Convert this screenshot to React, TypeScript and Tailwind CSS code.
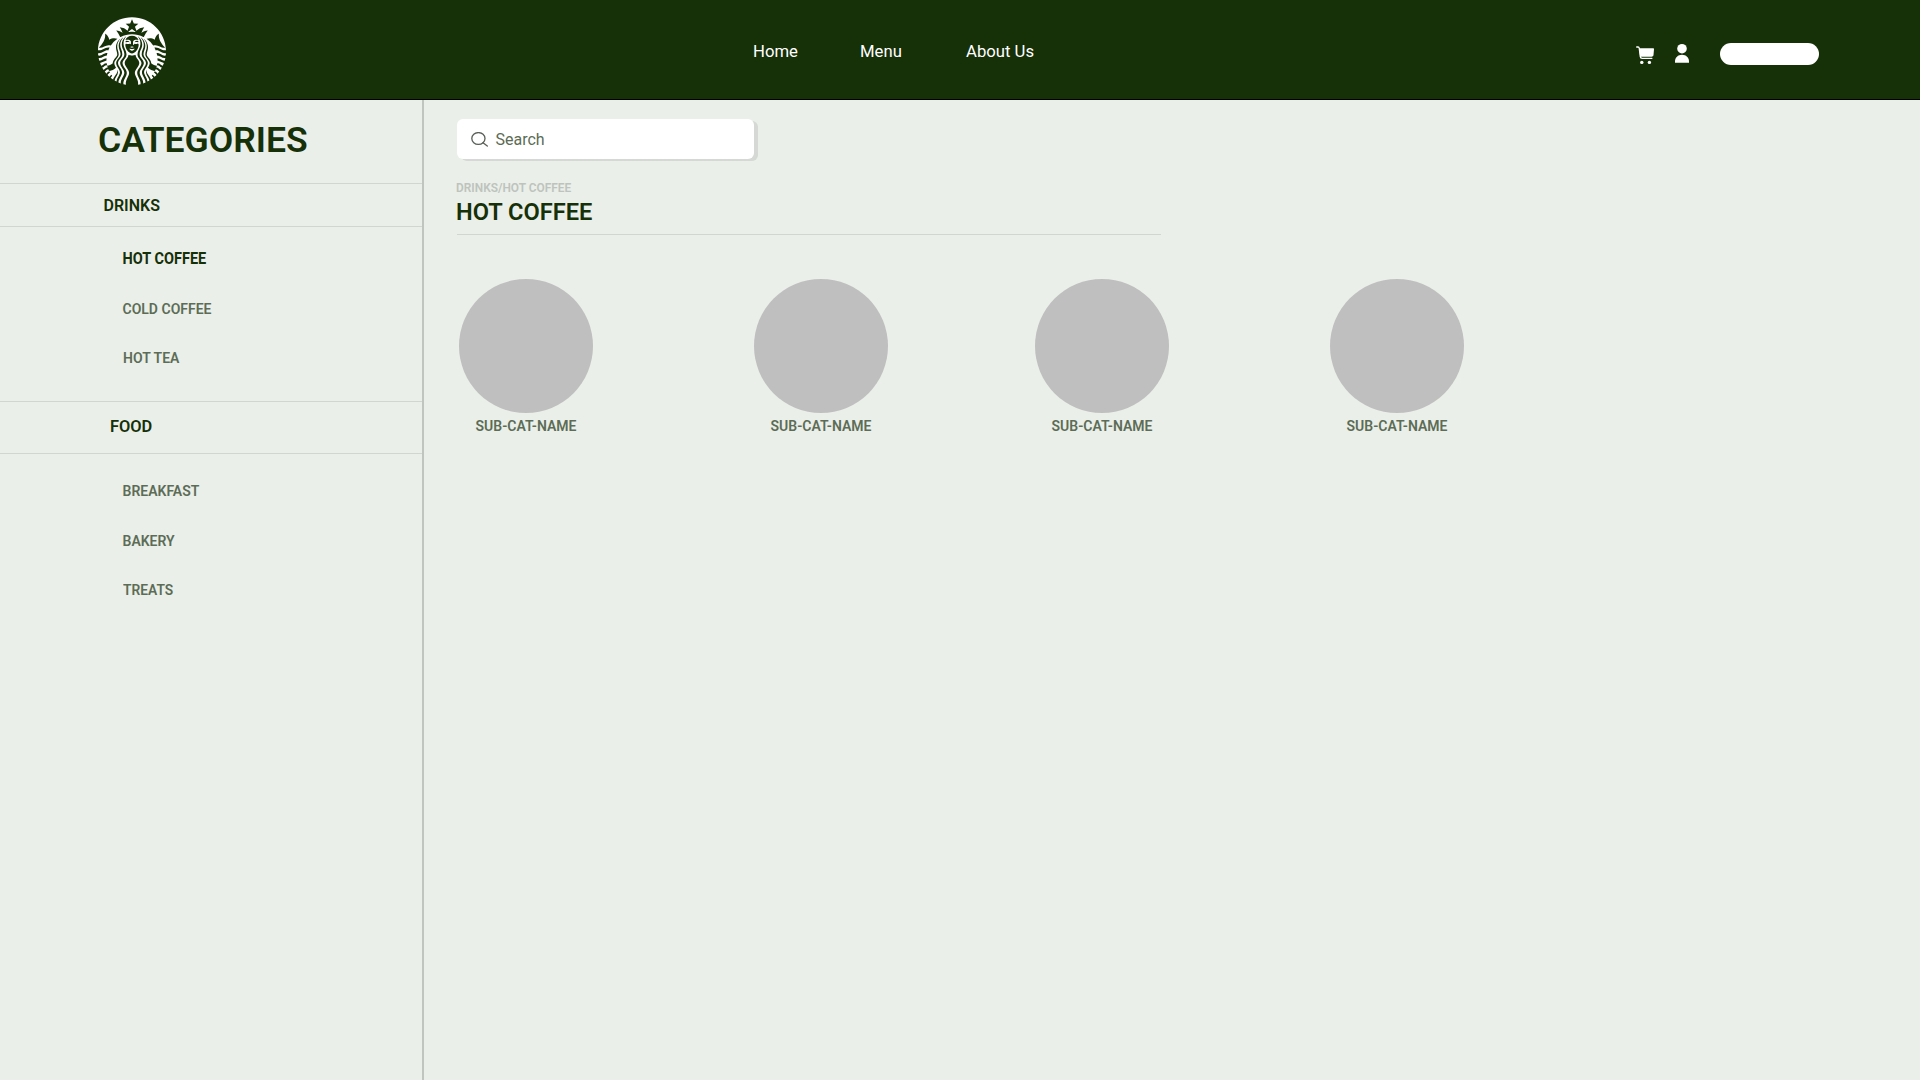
import { SiStarbucks } from 'react-icons/si';

const navLinks = [
  { label: 'Home', className: 'w-[107px]' },
  { label: 'Menu', className: 'w-[106px]' },
  { label: 'About Us', className: 'w-[80px]' },
];

const drinks = [
  { label: 'HOT COFFEE', className: 'pt-[2px] pl-[122.5px] text-[14.5px] font-bold text-[#163008]' },
  { label: 'COLD COFFEE', className: 'pl-[122.5px] text-sm font-semibold text-[#5c6c56]' },
  { label: 'HOT TEA', className: 'pl-[123px] text-sm font-semibold text-[#5c6c56]' },
];

const food = [
  { label: 'BREAKFAST', className: 'pb-[2px] pl-[122.5px] text-sm font-semibold text-[#5c6c56]' },
  { label: 'BAKERY', className: 'pl-[122.5px] text-sm font-semibold text-[#5c6c56]' },
  { label: 'TREATS', className: 'pl-[123px] text-[13.8px] font-semibold text-[#5c6c56]' },
];

const subCategories = [
  { label: 'SUB-CAT-NAME', className: '' },
  { label: 'SUB-CAT-NAME', className: 'ml-[161px]' },
  { label: 'SUB-CAT-NAME', className: 'ml-[147px]' },
  { label: 'SUB-CAT-NAME', className: 'ml-[161px]' },
];

function CartIcon() {
  return (
    <svg className="h-[19px] w-[19px] text-white" viewBox="0 0 19 19" fill="none">
      <path d="M3 2.2h14.100c.6 0 1 .5.900 1.100l-.5 5.700c-.1 1-.9 1.700-1.900 1.700H4.200z" fill="currentColor" />
      <path d="M.7 1h1.400c.6 0 1 .4 1.100 1l1.100 8.600c.1 1.100.8 1.700 1.800 1.700h9.800" stroke="currentColor" strokeWidth="1.300" strokeLinecap="round" />
      <circle cx="5.800" cy="16.400" r="1.700" fill="currentColor" />
      <circle cx="13.400" cy="16.400" r="1.700" fill="currentColor" />
    </svg>
  );
}

function UserIcon() {
  return (
    <svg className="h-[20px] w-[14px] text-white" viewBox="0 0 14 20" fill="currentColor">
      <circle cx="7" cy="5.700" r="4.800" />
      <path d="M0 19.800v-1.600C0 14.600 3 11.700 7 11.700s7 2.900 7 6.500v1.600z" />
    </svg>
  );
}

function SearchIcon() {
  return (
    <svg className="h-[15px] w-[17px] text-[#5a5f58]" viewBox="0 0 17 15" fill="none" stroke="currentColor" strokeWidth="1.300">
      <ellipse cx="7.400" cy="6.500" rx="6.600" ry="5.900" />
      <path d="M12 10.700l4.300 3.300" strokeLinecap="round" />
    </svg>
  );
}

function CategoryList({ items, className }: { items: typeof drinks; className: string }) {
  return (
    <ul className={className}>
      {items.map((item) => (
        <li key={item.label} className={`flex h-[49px] items-center ${item.className}`}>
          <span className="scale-y-[1.1] leading-5">{item.label}</span>
        </li>
      ))}
    </ul>
  );
}

export default function App() {
  return (
    <div className="flex h-screen w-full flex-col overflow-hidden bg-[#eaefe9] font-['Roboto',sans-serif] text-[#163008]">
      <header className="flex h-[100px] shrink-0 border-b border-black bg-[#163008]">
        <SiStarbucks className="mt-[16.5px] ml-[98px] size-[68px] shrink-0 text-white" />
        <nav className="ml-[587px] flex h-[103px] items-center text-[16.7px] text-white">
          {navLinks.map((link) => (
            <a key={link.label} className={`whitespace-nowrap ${link.className}`}>{link.label}</a>
          ))}
        </nav>
        <div className="mr-[101px] ml-auto flex items-start pt-[43px]">
          <div className="mt-[3px] mr-5"><CartIcon /></div>
          <div className="mr-[31px]"><UserIcon /></div>
          <div className="h-[22px] w-[99px] rounded-full bg-white" />
        </div>
      </header>

      <div className="flex min-h-0 flex-1">
        <aside className="w-[424px] shrink-0 border-r-2 border-[#c1c5c0]">
          <h1 className="h-[84px] border-b border-[#d2d6d1] pl-[98px] text-[35.5px] leading-[81px] font-semibold">CATEGORIES</h1>
          <h2 className="flex h-[43px] items-center border-b border-[#d2d6d1] pt-[2px] pl-[103.5px] text-base font-semibold">DRINKS</h2>
          <CategoryList items={drinks} className="h-[174px] pt-[7.5px]" />
          <h2 className="flex h-[53px] items-center border-y border-[#d2d6d1] pl-[110px] text-[16.4px] font-semibold">FOOD</h2>
          <CategoryList items={food} className="pt-[12.5px]" />
        </aside>

        <main className="flex-1 pt-[19px] pl-[33px]">
          <div className="flex h-[40px] w-[297px] items-center rounded-[6px] bg-white pl-[14px] shadow-[4px_2px_0_#d5d8d4]">
            <SearchIcon />
            <span className="ml-[7.5px] scale-y-[1.06] pt-[2px] text-base text-[#5c6c56]">Search</span>
          </div>
          <p className="-ml-px mt-[22px] text-[11.9px] leading-[14px] font-semibold text-[#bec3bd]">DRINKS/HOT COFFEE</p>
          <div className="h-[40px] w-[704px] border-b border-[#d2d6d1]">
            <h3 className="-ml-px text-[23.6px] leading-[35px] font-semibold">HOT COFFEE</h3>
          </div>
          <div className="mt-[44px] ml-[2px] flex">
            {subCategories.map((item, i) => (
              <div key={i} className={`flex w-[134px] flex-col items-center ${item.className}`}>
                <div className="size-[134px] rounded-full bg-[#bfbfbf]" />
                <span className="mt-[2px] scale-y-[1.1] text-sm leading-5 font-semibold text-[#5c6c56]">{item.label}</span>
              </div>
            ))}
          </div>
        </main>
      </div>
    </div>
  );
}
